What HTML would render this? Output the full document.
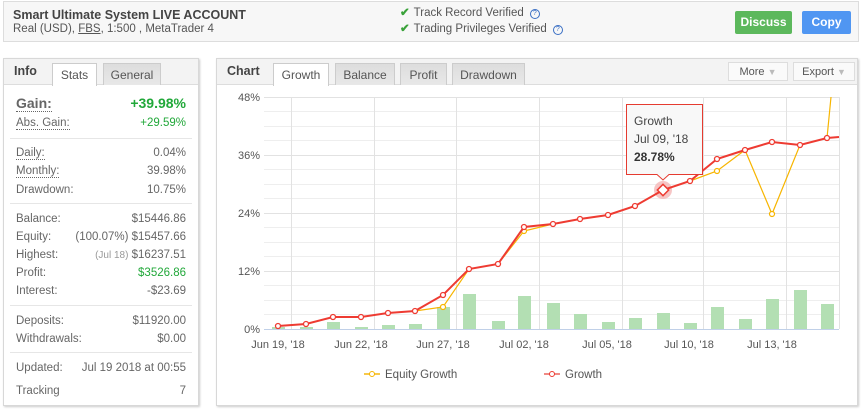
<!DOCTYPE html>
<html><head><meta charset="utf-8"><style>
*{margin:0;padding:0;box-sizing:border-box}
body{width:861px;height:409px;background:#fff;font-family:"Liberation Sans",Tahoma,sans-serif;color:#555;position:relative;overflow:hidden;font-size:12px}
.abs{position:absolute}
.hdr{left:3px;top:1px;width:856px;height:41px;border:1px solid #ddd;background:#f7f7f7}
.btn{position:absolute;color:#fff;font-weight:bold;font-size:12px;text-align:center;line-height:23px;border-radius:2px}
.panel{border:1px solid #d8d8d8;background:#fff;box-shadow:1px 1px 2px #ccc}
.tabbar{position:absolute;left:0;top:0;right:0;height:26px;background:#f3f3f3;border-bottom:1px solid #ddd}
.tab{position:absolute;top:4px;height:22px;line-height:22px;text-align:center;font-size:12px;color:#555;background:linear-gradient(#ddd,#e8e8e8);border:1px solid #ccc;border-bottom:none}
.tab.on{background:#fff;height:23px}
.ttl{position:absolute;top:5px;font-weight:bold;color:#444;font-size:12.5px}
.row{position:absolute;left:12px;right:12px;font-size:11.5px;color:#666}
.row span.r{position:absolute;right:0}
.dot{border-bottom:1px dotted #666}
.sep{position:absolute;left:6px;right:6px;height:1px;background:#e6e6e6}
.q{display:inline-block;width:10px;height:10px;border:1px solid #3a6fc4;border-radius:50%;font-size:7px;line-height:8px;text-align:center;color:#3a6fc4;margin-left:6px;vertical-align:1px}
.chk{color:#3aa23a;font-weight:bold;margin-right:4px}
</style></head><body>
<div class="abs hdr">
 <div class="abs" style="left:9px;top:6px;font-weight:bold;font-size:12.5px;color:#444">Smart Ultimate System LIVE ACCOUNT</div>
 <div class="abs" style="left:9px;top:21px;font-size:11.5px;color:#555">Real (USD), <u>FBS</u>, 1:500 , MetaTrader 4</div>
 <div class="abs" style="left:396px;top:3px;font-size:11.5px;color:#555"><span class="chk">✔</span>Track Record Verified<span class="q">?</span></div>
 <div class="abs" style="left:396px;top:19px;font-size:11.5px;color:#555"><span class="chk">✔</span>Trading Privileges Verified<span class="q">?</span></div>
 <div class="btn" style="left:731px;top:9px;width:57px;background:#5cb85c">Discuss</div>
 <div class="btn" style="left:798px;top:9px;width:49px;background:#5096f2">Copy</div>
</div>

<div class="abs panel" style="left:3px;top:58px;width:196px;height:348px">
 <div class="tabbar"></div>
 <div class="ttl" style="left:10px">Info</div>
 <div class="tab on" style="left:48px;width:45px">Stats</div>
 <div class="tab" style="left:99px;width:58px">General</div>
 <div class="row" style="top:36px;font-size:14px;font-weight:bold;color:#666"><span class="dot">Gain:</span><span class="r" style="color:#22a83a">+39.98%</span></div>
 <div class="row" style="top:58px"><span class="dot">Abs. Gain:</span><span class="r" style="color:#22a83a">+29.59%</span></div>
 <div class="sep" style="top:79px"></div>
 <div class="row" style="top:88px"><span class="dot">Daily:</span><span class="r">0.04%</span></div>
 <div class="row" style="top:106px"><span class="dot">Monthly:</span><span class="r">39.98%</span></div>
 <div class="row" style="top:125px">Drawdown:<span class="r">10.75%</span></div>
 <div class="sep" style="top:144px"></div>
 <div class="row" style="top:154px">Balance:<span class="r">$15446.86</span></div>
 <div class="row" style="top:172px">Equity:<span class="r">(100.07%) $15457.66</span></div>
 <div class="row" style="top:190px">Highest:<span class="r"><span style="color:#999;font-size:10px">(Jul 18)</span> $16237.51</span></div>
 <div class="row" style="top:208px">Profit:<span class="r" style="color:#22a83a">$3526.86</span></div>
 <div class="row" style="top:226px">Interest:<span class="r">-$23.69</span></div>
 <div class="sep" style="top:246px"></div>
 <div class="row" style="top:256px">Deposits:<span class="r">$11920.00</span></div>
 <div class="row" style="top:274px">Withdrawals:<span class="r">$0.00</span></div>
 <div class="sep" style="top:293px"></div>
 <div class="row" style="top:303px">Updated:<span class="r">Jul 19 2018 at 00:55</span></div>
 <div class="row" style="top:326px">Tracking<span class="r">7</span></div>
</div>

<div class="abs panel" style="left:216px;top:58px;width:642px;height:348px">
 <div class="tabbar"></div>
 <div class="ttl" style="left:10px">Chart</div>
 <div class="tab on" style="left:56px;width:56px">Growth</div>
 <div class="tab" style="left:118px;width:60px">Balance</div>
 <div class="tab" style="left:183px;width:47px">Profit</div>
 <div class="tab" style="left:235px;width:73px">Drawdown</div>
 <div class="tab" style="left:511px;top:3px;height:19px;line-height:18px;width:60px;background:#fafafa;border:1px solid #ddd;font-size:11px">More <span style="color:#bbb;font-size:9px">▼</span></div>
 <div class="tab" style="left:576px;top:3px;height:19px;line-height:18px;width:62px;background:#fafafa;border:1px solid #ddd;font-size:11px">Export <span style="color:#bbb;font-size:9px">▼</span></div>
</div>

<svg class="abs" style="left:0;top:0" width="861" height="409" font-family="Liberation Sans, sans-serif">
 <g stroke="#eee" stroke-width="1">
  <line x1="264" y1="111.5" x2="839" y2="111.5"/><line x1="264" y1="126.5" x2="839" y2="126.5"/><line x1="264" y1="140.5" x2="839" y2="140.5"/>
  <line x1="264" y1="169.5" x2="839" y2="169.5"/><line x1="264" y1="184.5" x2="839" y2="184.5"/><line x1="264" y1="198.5" x2="839" y2="198.5"/>
  <line x1="264" y1="227.5" x2="839" y2="227.5"/><line x1="264" y1="242.5" x2="839" y2="242.5"/><line x1="264" y1="256.5" x2="839" y2="256.5"/>
  <line x1="264" y1="285.5" x2="839" y2="285.5"/><line x1="264" y1="300.5" x2="839" y2="300.5"/><line x1="264" y1="314.5" x2="839" y2="314.5"/>
 </g>
 <g stroke="#e2e2e2" stroke-width="1">
  <line x1="264" y1="97.5" x2="839" y2="97.5"/><line x1="264" y1="155.5" x2="839" y2="155.5"/><line x1="264" y1="213.5" x2="839" y2="213.5"/><line x1="264" y1="271.5" x2="839" y2="271.5"/>
  <line x1="291.5" y1="97" x2="291.5" y2="329"/><line x1="374.5" y1="97" x2="374.5" y2="329"/><line x1="456.5" y1="97" x2="456.5" y2="329"/><line x1="539.5" y1="97" x2="539.5" y2="329"/><line x1="622.5" y1="97" x2="622.5" y2="329"/><line x1="703.5" y1="97" x2="703.5" y2="329"/><line x1="786.5" y1="97" x2="786.5" y2="329"/><line x1="839.5" y1="97" x2="839.5" y2="329"/>
 </g>
 <g fill="#b3dfb3">
  <rect x="272" y="327" width="13" height="2"/><rect x="300" y="327" width="13" height="2"/><rect x="327" y="322" width="13" height="7"/><rect x="355" y="327" width="13" height="2"/><rect x="382" y="325" width="13" height="4"/><rect x="409" y="324" width="13" height="5"/><rect x="437" y="307" width="13" height="22"/><rect x="463" y="294" width="13" height="35"/><rect x="492" y="321" width="13" height="8"/><rect x="518" y="296" width="13" height="33"/><rect x="547" y="303" width="13" height="26"/><rect x="574" y="314" width="13" height="15"/><rect x="602" y="322" width="13" height="7"/><rect x="629" y="318" width="13" height="11"/><rect x="657" y="313" width="13" height="16"/><rect x="684" y="323" width="13" height="6"/><rect x="711" y="307" width="13" height="22"/><rect x="739" y="319" width="13" height="10"/><rect x="766" y="299" width="13" height="30"/><rect x="794" y="290" width="13" height="39"/><rect x="821" y="304" width="13" height="25"/>
 </g>
 <line x1="264" y1="329.5" x2="839" y2="329.5" stroke="#c0d0e8"/>
 <g font-size="11" fill="#555" text-anchor="end">
  <text x="260" y="101">48%</text><text x="260" y="159">36%</text><text x="260" y="217">24%</text><text x="260" y="275">12%</text><text x="260" y="333">0%</text>
 </g>
 <g font-size="11" fill="#555" text-anchor="middle">
  <text x="278" y="348">Jun 19, '18</text><text x="361" y="348">Jun 22, '18</text><text x="443" y="348">Jun 27, '18</text><text x="524" y="348">Jul 02, '18</text><text x="607" y="348">Jul 05, '18</text><text x="689" y="348">Jul 10, '18</text><text x="772" y="348">Jul 13, '18</text>
 </g>
 <polyline fill="none" stroke="#f7b500" stroke-width="1.2" points="278,326 306,324 333,317 361,317 388,313 415,311 443,307 469,269 498,264 524,231 553,224 580,219 608,215 635,206 663,190 690,181 717,171 745,150 772,214 800,145 827,138 831,97"/>
 <g fill="#fff" stroke="#f7b500" stroke-width="1.2"><circle cx="443" cy="307" r="2.5"/><circle cx="524" cy="231" r="2.5"/><circle cx="717" cy="171" r="2.5"/><circle cx="772" cy="214" r="2.5"/></g>
 <circle cx="663" cy="190" r="9" fill="#f4b6b6" opacity="0.8"/>
 <polyline fill="none" stroke="#ee3b32" stroke-width="2" points="278,326 306,324 333,317 361,317 388,313 415,311 443,295 469,269 498,264 524,227 553,224 580,219 608,215 635,206 663,190 690,181 717,159 745,150 772,142 800,145 827,138 839,137"/>
 <g fill="#fff" stroke="#ee3b32" stroke-width="1.3">
  <circle cx="278" cy="326" r="2.5"/><circle cx="306" cy="324" r="2.5"/><circle cx="333" cy="317" r="2.5"/><circle cx="361" cy="317" r="2.5"/><circle cx="388" cy="313" r="2.5"/><circle cx="415" cy="311" r="2.5"/><circle cx="443" cy="295" r="2.5"/><circle cx="469" cy="269" r="2.5"/><circle cx="498" cy="264" r="2.5"/><circle cx="524" cy="227" r="2.5"/><circle cx="553" cy="224" r="2.5"/><circle cx="580" cy="219" r="2.5"/><circle cx="608" cy="215" r="2.5"/><circle cx="635" cy="206" r="2.5"/><circle cx="690" cy="181" r="2.5"/><circle cx="717" cy="159" r="2.5"/><circle cx="745" cy="150" r="2.5"/><circle cx="772" cy="142" r="2.5"/><circle cx="800" cy="145" r="2.5"/><circle cx="827" cy="138" r="2.5"/>
 </g>
 <rect x="659" y="186" width="8" height="8" transform="rotate(45 663 190)" fill="#fff" stroke="#ee3b32" stroke-width="1.5"/>
 <path d="M626.5,104.5 H702.5 V174.5 H669 L663,180 L657,174.5 H626.5 Z" fill="#f8f8f8" stroke="#e53b30" stroke-width="1"/>
 <text x="634" y="125" font-size="12" fill="#444">Growth</text>
 <text x="634" y="143" font-size="12" fill="#444">Jul 09, '18</text>
 <text x="634" y="161" font-size="12" font-weight="bold" fill="#333">28.78%</text>
 <line x1="364" y1="374" x2="380" y2="374" stroke="#f7c94a" stroke-width="2"/><circle cx="372" cy="374" r="2.5" fill="#fff" stroke="#f7b500"/>
 <text x="385" y="378" font-size="11.5" fill="#555">Equity Growth</text>
 <line x1="544" y1="374" x2="560" y2="374" stroke="#f08a84" stroke-width="2"/><circle cx="552" cy="374" r="2.5" fill="#fff" stroke="#ee3b32"/>
 <text x="565" y="378" font-size="11.5" fill="#555">Growth</text>
</svg>
</body></html>
